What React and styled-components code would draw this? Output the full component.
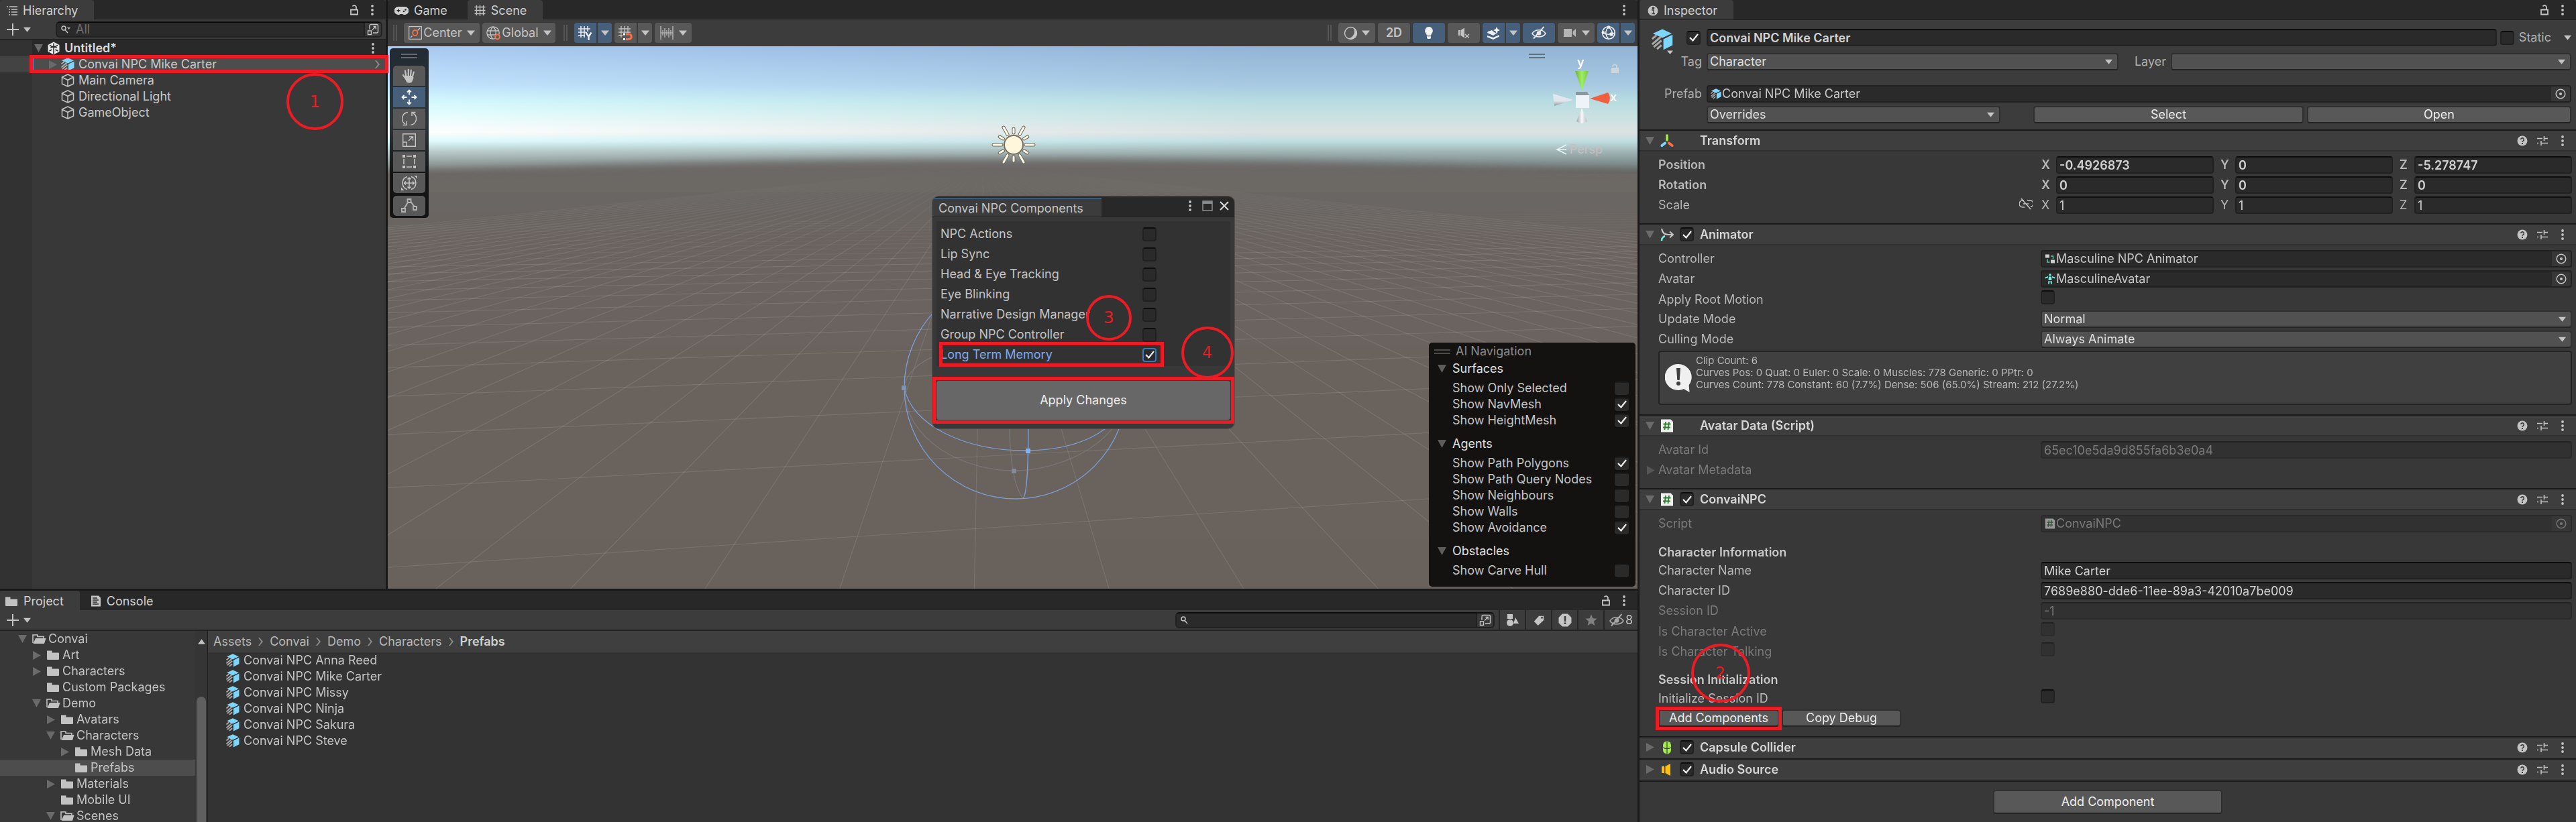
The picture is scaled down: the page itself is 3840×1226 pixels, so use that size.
import React from "react";
import styled, { createGlobalStyle, css } from "styled-components";

const GlobalStyle = createGlobalStyle`
  *, *::before, *::after { box-sizing: border-box; }
  body { margin: 0; background: #191919; font-optical-sizing: none; }
  body, button, input, select {
    font-family: Inter, Roboto, "Liberation Sans", sans-serif;
    font-size: 18px;
    line-height: 24px;
    color: #c4c4c4;
  }
  button, input, select { font-optical-sizing: none; }
  button { margin: 0; padding: 0; border: 0; background: none; cursor: pointer; }
  ul { list-style: none; margin: 0; padding: 0; }
  svg { display: block; flex: none; }
`;

/* ---------- icons ---------- */

const Icon = ({ w = 20, h, box, children, label }) => (
  <svg
    width={w}
    height={h || w}
    viewBox={box || "0 0 20 20"}
    fill="none"
    stroke="none"
    role={label ? "img" : undefined}
    aria-label={label}
    aria-hidden={label ? undefined : true}
  >
    {children}
  </svg>
);

const G = "#c4c4c4";

const Down = ({ w = 12, color = G }) => (
  <Icon w={w} h={Math.round(w * 0.7)} box="0 0 12 8"><path d="M0 0.5h12L6 8z" fill={color} /></Icon>
);
const FoldOpen = ({ color = "#6a6a6a" }) => (
  <Icon w={13} h={12} box="0 0 13 12"><path d="M0 0h13L6.500 12z" fill={color} /></Icon>
);
const FoldClosed = ({ color = "#6a6a6a" }) => (
  <Icon w={12} h={13} box="0 0 12 13"><path d="M0 0v13L12 6.500z" fill={color} /></Icon>
);
const Dots = () => (
  <Icon w={4} h={16} box="0 0 4 16">
    <circle cx="2" cy="2" r="1.900" fill={G} /><circle cx="2" cy="8" r="1.900" fill={G} /><circle cx="2" cy="14" r="1.900" fill={G} />
  </Icon>
);
const Lock = () => (
  <Icon w={14} h={18} box="0 0 14 18">
    <path d="M2 8.500h10v7H2zM10 8V4.500A3 3 0 0 0 4.500 3.500" stroke={G} strokeWidth="1.800" />
  </Icon>
);
const ListIcon = () => (
  <Icon w={16} h={14} box="0 0 16 14">
    <path d="M0 1h2M4 1h12M3 5h2M7 5h9M3 9h2M7 9h9M3 13h2M7 13h9" stroke={G} strokeWidth="1.600" />
  </Icon>
);
const Plus = () => (
  <Icon w={18} box="0 0 18 18"><path d="M9 0v18M0 9h18" stroke={G} strokeWidth="2" /></Icon>
);
const SearchGlyph = ({ caret }) => (
  <Icon w={14} h={12} box="0 0 14 12">
    <circle cx="4" cy="4" r="3" stroke={G} strokeWidth="1.500" />
    <path d="M6 6.500l4 4.500" stroke={G} strokeWidth="1.600" />
    {caret && <path d="M9 3h5l-2.500 3z" fill={G} />}
  </Icon>
);
const PopOut = () => (
  <Icon w={18} box="0 0 18 18">
    <path d="M4 9V3.500A2 2 0 0 1 6 1.500h8.500a2 2 0 0 1 2 2V12a2 2 0 0 1-2 2H9" stroke={G} strokeWidth="1.400" />
    <path d="M1.500 11h5v5.500h-5zM8 9.500l5-5M9.500 4.500h3.700v3.700" stroke={G} strokeWidth="1.400" />
  </Icon>
);
const UnityIcon = () => (
  <Icon w={20} box="0 0 20 20">
    <path d="M10 0.500L18.500 5v10L10 19.500 1.500 15V5z" fill="#e8e8e8" />
    <path d="M10 2.500V7L5.500 9M10 2.500V7l4.500 2M3.500 14l4-2M16.500 14l-4-2M10 11v8M4 5.500L10 9l6-3.500M10 9v4" stroke="#282828" strokeWidth="1.500" />
  </Icon>
);
const CubeIcon = () => (
  <Icon w={20} box="0 0 20 20">
    <path d="M10 1l8.500 4v10L10 19l-8.500-4V5zM1.500 5L10 9.500 18.500 5M10 9.500V19" stroke={G} strokeWidth="1.500" strokeLinejoin="round" />
  </Icon>
);
const PrefabIcon = ({ w = 20, h }) => (
  <Icon w={w} h={h || w} box="0 0 20 20">
    <path d="M10 0.300L18.800 4.300 10 8.500 1.200 4.300z" fill="#7fd6fd" />
    <path d="M19.500 5.500v9.800L11 19.600V9.700z" fill="#7fd6fd" />
    <path d="M0.500 9.500L4.500 6M0.500 14.500L8.500 7.500M2 17L9.200 10.800M5 18.800L9.200 15.200" stroke="#a9a9a9" strokeWidth="1.900" />
  </Icon>
);
const FolderIcon = () => (
  <Icon w={20} h={16} box="0 0 20 16"><path d="M1 1.500h7.500v3H18a1 1 0 0 1 1 1V14a1 1 0 0 1-1 1H2a1 1 0 0 1-1-1z" fill="#c2c2c2" /></Icon>
);
const FolderOpen = () => (
  <Icon w={21} h={16} box="0 0 21 16">
    <path d="M1 14V2h7v2.500h9V7" stroke="#c2c2c2" strokeWidth="1.600" />
    <path d="M5 7h15.500L18 15H1.500z" fill="#c2c2c2" />
  </Icon>
);
const ConsoleIcon = () => (
  <Icon w={16} h={17} box="0 0 16 17">
    <path d="M1 0.500h11L15 3.500V16.500H1z" fill={G} />
    <path d="M3 4h7M3 7h9M3 10h7M3 13h9" stroke="#282828" strokeWidth="1.400" />
  </Icon>
);
const GamePad = () => (
  <Icon w={21} h={12} box="0 0 21 12">
    <path d="M6 0h9a6 6 0 1 1-3 11H9A6 6 0 1 1 6 0z" fill="#d0d0d0" />
    <path d="M6 3.300v5M3.500 5.800h5" stroke="#282828" strokeWidth="1.500" />
    <circle cx="14" cy="7" r="1.300" fill="#282828" /><circle cx="16.500" cy="4.500" r="1.300" fill="#282828" />
  </Icon>
);
const HashIcon = () => (
  <Icon w={17} box="0 0 17 17"><path d="M3.500 1v15M8.500 0v17M13.500 1v15M0.500 3.500h16M0.500 8.500h16M0.500 13.500h16" stroke={G} strokeWidth="1.300" /></Icon>
);
const PivotIcon = () => (
  <Icon w={20}>
    <path d="M0.700 0.700h18.600v18.600H0.700z" stroke={G} strokeWidth="1.200" />
    <path d="M3 17l2.500-2.500M13.500 6.500L17 3" stroke={G} strokeWidth="1.400" />
    <ellipse cx="9.800" cy="10" rx="3.600" ry="4" stroke="#ff6f43" strokeWidth="1.800" />
  </Icon>
);
const GlobeIcon = () => (
  <Icon w={21} box="0 0 21 21">
    <circle cx="10" cy="10" r="9.200" stroke={G} strokeWidth="1.300" />
    <path d="M10 1c-5 4-5 14 0 18M10 1c5 4 5 10 3 12M1.500 7h17M1.500 13h11" stroke={G} strokeWidth="1.300" />
    <circle cx="16.500" cy="16" r="3.400" stroke="#ff6f43" strokeWidth="2" fill="#585858" />
  </Icon>
);
const GridY = () => (
  <Icon w={21} box="0 0 21 21">
    <path d="M4 0v17M9 0v17M14 0v8M0 4h18M0 9h12M0 14h10" stroke="#eee" strokeWidth="1.500" />
    <path d="M11.500 9.500l4 6 4-6M15.500 15v6" stroke="#eee" strokeWidth="2.400" />
  </Icon>
);
const SnapIcon = () => (
  <Icon w={21} box="0 0 21 21">
    <path d="M4 0v17M9 0v10M14 0v10M0 4h18M0 9h18M0 14h6" stroke={G} strokeWidth="1.300" />
    <path d="M11 12h4.500a3.500 3.500 0 0 1 0 7.500H11" stroke="#ff6f43" strokeWidth="3" />
    <path d="M7 10.500h3v3H7zM7 18h3v3H7z" fill="#fff" />
  </Icon>
);
const RulerIcon = () => (
  <Icon w={20} box="0 0 20 20"><path d="M1 0v20M19 0v20M1 10h18M4 6v8M7 3v14M10 6v8M13 3v14M16 6v8" stroke={G} strokeWidth="1.200" /></Icon>
);
const ShadeIcon = () => (
  <Icon w={21} box="0 0 21 21">
    <circle cx="10.500" cy="10.500" r="9" stroke={G} strokeWidth="1.400" />
    <path d="M14 2a10 10 0 0 1-8 16 9 9 0 1 0 8-16z" fill={G} />
  </Icon>
);
const BulbIcon = () => (
  <Icon w={20}>
    <path d="M10 1a6 6 0 0 1 4 10.300L13 14H7l-1-2.700A6 6 0 0 1 10 1z" fill="#f2f2f2" />
    <path d="M7 15.300h6V17a2 2 0 0 1-2 2H9a2 2 0 0 1-2-2z" fill="#f2f2f2" />
  </Icon>
);
const MuteIcon = () => (
  <Icon w={20}>
    <path d="M2 6h2.500v8H2zM5.500 6L11 2.500v15L5.500 14z" fill={G} />
    <path d="M12 12l6 5.500M18 12l-6 5.500" stroke={G} strokeWidth="1.500" />
  </Icon>
);
const FxIcon = () => (
  <Icon w={21} box="0 0 21 21">
    <path d="M2 8l6-2 2 2 3 2 4-1-7 5-9-4zM1 14l9 3 9-4v2.500L10 20l-9-3.500z" fill="#eee" />
    <path d="M15 1l1.500 3.500L20 6l-3.500 1.500L15 11l-1.500-3.500L10 6l3.500-1.500z" fill="#fff" />
  </Icon>
);
const EyeOff = ({ color = "#e8e8e8" }) => (
  <Icon w={22} h={20} box="0 0 22 20">
    <path d="M1 11c4-7 16-7 20 0-4 6.500-16 6.500-20 0z" stroke={color} strokeWidth="1.600" />
    <circle cx="11" cy="10.500" r="3.300" fill={color} />
    <path d="M3 18.500L18.500 1" stroke={color} strokeWidth="1.900" />
  </Icon>
);
const CamIcon = () => (
  <Icon w={20}><path d="M1 4h12v12H1zM14.500 8L19 4v12l-4.500-4z" fill="#b4b4b4" /></Icon>
);
const GizmoIcon = () => (
  <Icon w={22} box="0 0 22 22">
    <circle cx="11" cy="11" r="9.300" stroke="#eee" strokeWidth="1.600" />
    <path d="M11 2c-6 6-5 13 0 18M11 2c5 5 6 8 5 11M2 10c4 4 12 4 18 1" stroke="#eee" strokeWidth="1.500" />
    <circle cx="11" cy="2.500" r="2.300" fill="#eee" /><circle cx="2.800" cy="10.500" r="2.300" fill="#eee" /><circle cx="15" cy="13" r="2.800" fill="#eee" />
  </Icon>
);
const HandIcon = () => (
  <Icon w={22} box="0 0 22 22">
    <path d="M6.500 12.500L5 3.500M9.800 11V1.800M13 11l0.800-8.500M15.800 12.500l2-7M6 15.500L2 10" stroke={G} strokeWidth="2.200" strokeLinecap="round" />
    <path d="M5 11h11.500l1 3-2.500 6.500c-2 1.500-6 1.500-8 0L4.500 14z" fill={G} />
  </Icon>
);
const MoveIcon = () => (
  <Icon w={24} box="0 0 24 24">
    <path d="M12 1.500v7M12 15.500v7M1.500 12h7M15.500 12h7M9 4.500l3-3 3 3M9 19.500l3 3 3-3M4.500 9l-3 3 3 3M19.500 9l3 3-3 3" stroke="#f2f2f2" strokeWidth="1.800" />
  </Icon>
);
const RotateIcon = () => (
  <Icon w={22} box="0 0 22 22">
    <path d="M9 1.500A9.500 9.500 0 0 0 5 19M1.500 20.500H7V15M13 20.500A9.500 9.500 0 0 0 17 3M20.500 1.500H15V7" stroke={G} strokeWidth="1.500" />
  </Icon>
);
const ScaleIcon = () => (
  <Icon w={20}>
    <path d="M0.700 0.700h18.600v18.600H0.700zM0.700 13H6v6.500M9 11l6-6M10 5h5.500v5.500" stroke={G} strokeWidth="1.400" />
  </Icon>
);
const RectIcon = () => (
  <Icon w={20}>
    <path d="M0 0h4v4H0zM16 0h4v4h-4zM0 16h4v4H0zM16 16h4v4h-4z" fill={G} />
    <path d="M6 2h8M6 18h8M2 6v8M18 6v8" stroke={G} strokeWidth="1.600" />
  </Icon>
);
const TransformTool = () => (
  <Icon w={24} box="0 0 24 24">
    <path d="M9 2.500A10 10 0 0 0 9 21.500M15 2.500a10 10 0 0 1 0 19M12 4v16M4.500 12h15M9.500 6.500L12 4l2.500 2.500M9.500 17.500L12 20l2.500-2.500M7 9.500L4.500 12 7 14.500M17 9.500l2.500 2.500-2.500 2.500" stroke={G} strokeWidth="1.500" />
    <path d="M19.500 1H24v4.500zM0 18.500V23h4.500z" fill={G} />
  </Icon>
);
const SplineTool = () => (
  <Icon w={24} box="0 0 24 24">
    <path d="M9.500 2h5v5h-5zM1 16h5v5H1zM18 13h5v5h-5zM10 7L4.500 16M14.500 6l5 7" stroke="#b4b4b4" strokeWidth="1.900" />
  </Icon>
);
const InfoIcon = () => (
  <Icon w={16} box="0 0 16 16">
    <circle cx="8" cy="8" r="7.500" fill={G} />
    <path d="M6 7h3v5.500M6 12.500h5M7.500 3h2v2h-2z" stroke="#3c3c3c" strokeWidth="1.500" />
  </Icon>
);
const HelpIcon = () => (
  <Icon w={16} box="0 0 16 16">
    <circle cx="8" cy="8" r="7.500" fill={G} />
    <path d="M5.700 6a2.300 2.300 0 1 1 3.300 2.200c-.7.300-1 .6-1 1.500" stroke="#3c3c3c" strokeWidth="1.600" />
    <path d="M7 11h2v2H7z" fill="#3c3c3c" />
  </Icon>
);
const PresetIcon = () => (
  <Icon w={16} box="0 0 16 16"><path d="M0 4.500h8M11 4.500h5M10.500 1v7M0 11.500h2M5.500 11.500H16M6 8v7" stroke={G} strokeWidth="1.600" /></Icon>
);
const PickerIcon = ({ color = G }) => (
  <Icon w={16} box="0 0 16 16"><circle cx="8" cy="8" r="6.800" stroke={color} strokeWidth="1.500" /><circle cx="8" cy="8" r="2.100" fill={color} /></Icon>
);
const AxesIcon = () => (
  <Icon w={20}>
    <path d="M10 2v7" stroke="#a4ee4c" strokeWidth="3.600" strokeLinecap="round" />
    <path d="M7 13.500l-4.500 3.500" stroke="#7fd6fd" strokeWidth="4" strokeLinecap="round" />
    <path d="M13 13.500l4.500 3.500" stroke="#ff6f43" strokeWidth="4" strokeLinecap="round" />
  </Icon>
);
const AnimatorIcon = () => (
  <Icon w={20}>
    <path d="M2 1c1 6 4 9 10 9h6M14 5.500l5 4.500-5 4.500" stroke={G} strokeWidth="2.200" />
    <path d="M2 19c0-3 1-5.500 5-7" stroke="#6ef0dc" strokeWidth="2.600" />
  </Icon>
);
const ScriptIcon = ({ w = 20, dim }) => (
  <Icon w={w}>
    <g opacity={dim ? 0.55 : 1}>
      <path d="M1 0.500h14.500L19 4v15.500H1z" fill="#efefef" />
      <path d="M8 4L6.500 16M13 4l-1.500 12M4.500 7.500h11M4 12.500h11" stroke="#2e7d32" strokeWidth="1.800" />
    </g>
  </Icon>
);
const CapsuleIcon = () => (
  <Icon w={20}>
    <rect x="4" y="0.500" width="12" height="19" rx="6" fill="#a4ee4c" />
    <path d="M10 1v18M4 10c3 2 9 2 12 0" stroke="#3c3c3c" strokeWidth="1.200" />
  </Icon>
);
const AudioIcon = () => (
  <Icon w={20}><path d="M2 5h4v10H2zM7.500 5L15 1v18l-7.500-4z" fill="#ffc107" /></Icon>
);
const ControllerIcon = () => (
  <Icon w={16} box="0 0 16 16">
    <path d="M1 1.500h6v5H1zM9 9.500h6v5H9z" fill="#d0d0d0" />
    <path d="M9 4h3.500v4M4 8.500V13h3.500" stroke="#5fd0b8" strokeWidth="1.400" />
  </Icon>
);
const AvatarIcon = () => (
  <Icon w={16} box="0 0 16 16">
    <circle cx="8" cy="2" r="1.800" fill="#6ef0dc" />
    <path d="M6 4.500h4l.5 5.500h-5zM0.500 5.500l4.500-1.500v2L1 7.500zM15.500 5.500L11 4v2l4 1.500zM5.500 11h2L7 15.500H5zM8.500 11h2l.5 4.500H9z" fill="#6ef0dc" />
  </Icon>
);
const LinkOff = () => (
  <Icon w={20}>
    <path d="M7 5H5a4.500 4.500 0 0 0 0 10h3M12 5h3a4.500 4.500 0 0 1 2 9.500M6 10h3M11 10h3M3 2l14 16" stroke={G} strokeWidth="1.500" />
  </Icon>
);
const BubbleIcon = () => (
  <Icon w={40} h={42} box="0 0 40 42">
    <path d="M20 0a20 19.500 0 1 1-8 37.500A20 19.500 0 0 1 20 0z" fill="#f0f0f0" />
    <path d="M26 36l10.500 6-1-12z" fill="#f0f0f0" />
    <path d="M17 6h6l-1.300 18h-3.400z" fill="#404040" /><circle cx="20" cy="29" r="3" fill="#404040" />
  </Icon>
);
const ShapesIcon = () => (
  <Icon w={20}><path d="M2 1h8v7H2zM14 6l5 9h-8z" fill={G} /><circle cx="6" cy="14" r="5" fill={G} /></Icon>
);
const TagIcon = () => (
  <Icon w={18}><path d="M10 3h8v7L8.500 19 2 12z" fill={G} /><circle cx="15" cy="6" r="1.600" fill="#3c3c3c" /></Icon>
);
const AlertIcon = () => (
  <Icon w={20}>
    <path d="M6 0.500h8L19.500 6v8L14 19.500H6L0.500 14V6z" fill={G} /><path d="M8.700 4h2.600v8H8.700zM8.700 13.500h2.600V16H8.700z" fill="#3c3c3c" />
  </Icon>
);
const StarIcon = () => (
  <Icon w={18}><path d="M10 0.500l2.700 6.500 6.800.5-5.200 4.500 1.700 7L10 15.200 4 19l1.700-7L.5 7.500 7.300 7z" fill="#808080" /></Icon>
);
const MaxIcon = () => (
  <Icon w={16} box="0 0 16 16"><path d="M1 1h14v14H1z" stroke="#8a8a8a" strokeWidth="1.600" /><path d="M1 1h14v4H1z" fill="#8a8a8a" /></Icon>
);
const CloseIcon = () => (
  <Icon w={14} box="0 0 14 14"><path d="M1 1l12 12M13 1L1 13" stroke="#dcdcdc" strokeWidth="2" /></Icon>
);
const Crumb = () => (
  <Icon w={9} h={14} box="0 0 9 14"><path d="M1 1h2l5 6-5 6H1l4.500-6z" fill="#8c8c8c" /></Icon>
);

/* ---------- shell ---------- */

const Editor = styled.div`
  display: grid;
  grid-template-columns: minmax(0, 2441fr) minmax(0, 1396fr);
  grid-template-rows: minmax(0, 1fr);
  gap: 3px;
  height: 100vh;
  overflow: hidden;
  background: #191919;
`;
const Workspace = styled.div`
  display: grid;
  grid-template-rows: minmax(0, 878fr) minmax(0, 345fr);
  gap: 3px;
  min-width: 0;
`;
const TopRow = styled.div`
  display: grid;
  grid-template-columns: minmax(0, 575fr) minmax(0, 1863fr);
  gap: 3px;
  min-height: 0;
`;
const Panel = styled.section`
  position: relative;
  display: flex;
  flex-direction: column;
  min-width: 0;
  min-height: 0;
  background: #383838;
`;
const TabBar = styled.div`
  display: flex;
  align-items: stretch;
  height: 29px;
  flex: none;
  background: #282828;
  border-radius: 4px 4px 0 0;
`;
const Tab = styled.button`
  display: flex;
  align-items: center;
  gap: 8px;
  padding: 2px ${(p) => p.$end || 24}px 0 ${(p) => p.$start || 10}px;
  background: ${(p) => (p.$active ? "#3c3c3c" : "transparent")};
  border-radius: 4px 4px 0 0;
  color: #d0d0d0;
`;
const TabTools = styled.div`
  display: flex;
  align-items: center;
  gap: 18px;
  margin-left: auto;
  padding-right: 18px;
`;
const Plain = styled.button`
  display: flex;
  align-items: center;
  justify-content: center;
`;
const PanelTools = ({ lock = true }) => (
  <TabTools>
    {lock && <Plain aria-label="Lock panel"><Lock /></Plain>}
    <Plain aria-label="Panel menu"><Dots /></Plain>
  </TabTools>
);
const ToolStrip = styled.div`
  display: flex;
  align-items: center;
  height: 31px;
  flex: none;
  background: #3c3c3c;
  border-bottom: 2px solid #232323;
`;
const CreateButton = styled.button`
  display: flex;
  align-items: center;
  gap: 7px;
  padding: 0 10px;
`;
const SearchBox = styled.label`
  display: flex;
  align-items: center;
  height: 24px;
  overflow: hidden;
  background: #2a2a2a;
  border: 2px solid #212121;
  border-top-color: #0d0d0d;
  border-radius: 6px;
  padding-left: 6px;
  input {
    flex: 1;
    min-width: 0;
    height: 20px;
    padding: 0 8px;
    border: 0;
    outline: 0;
    background: none;
  }
  input::placeholder { color: #6e6e6e; opacity: 1; }
`;
const SearchEnd = styled.button`
  display: flex;
  align-items: center;
  justify-content: center;
  width: 26px;
  height: 22px;
  background: #383838;
  border-left: 2px solid #212121;
`;
const HierSearch = styled(SearchBox)`
  flex: 1;
  margin: 0 5px 0 27px;
`;
const ProjectSearch = styled(SearchBox)`
  width: 476px;
  margin-left: auto;
  margin-right: 6px;
`;

/* ---------- annotations ---------- */

const marked = css`
  position: relative;
  &::after {
    content: "";
    position: absolute;
    inset: ${(p) => p.$mark};
    border: 5px solid #ed1c24;
    pointer-events: none;
    z-index: 3;
  }
`;
const Marker = styled.div`
  position: absolute;
  z-index: 5;
  left: ${(p) => p.$x}px;
  top: ${(p) => p.$y}px;
  width: ${(p) => p.$d}px;
  height: ${(p) => p.$d}px;
  display: flex;
  align-items: center;
  justify-content: center;
  border: 4px solid #ed1c24;
  border-radius: 50%;
  color: #ed1c24;
  font-family: "DejaVu Sans", sans-serif;
  font-size: 24px;
  pointer-events: none;
`;

/* ---------- hierarchy ---------- */

const HierarchyBody = styled.ul`
  flex: 1;
  background: linear-gradient(90deg, #323232 48px, #383838 48px);
`;
const HierRow = styled.li`
  display: flex;
  align-items: center;
  height: 24px;
  gap: 6px;
  padding: 0 8px 0 ${(p) => p.$pad}px;
  font-weight: ${(p) => (p.$scene ? 600 : 400)};
  color: ${(p) => (p.$scene ? "#dcdcdc" : "#c8c8c8")};
  background: ${(p) => (p.$scene ? "linear-gradient(90deg, #323232 48px, #292929 48px)" : "none")};
`;
const SelectedRow = styled(HierRow)`
  ${marked}
  background: linear-gradient(90deg, #434343 49px, #2680c0 49px, #2680c0 51px, #4d4d4d 51px);
`;
const Push = styled.span`
  margin-left: auto;
  padding-right: ${(p) => p.$end || 0}px;
`;
const FoldSlot = styled.span`
  display: flex;
  justify-content: center;
  width: 13px;
`;

const Hierarchy = () => (
  <Panel>
    <TabBar>
      <Tab $active><ListIcon />Hierarchy</Tab>
      <PanelTools />
    </TabBar>
    <ToolStrip>
      <CreateButton aria-label="Create"><Plus /><Down w={11} /></CreateButton>
      <HierSearch>
        <SearchGlyph caret />
        <input type="text" placeholder="All" aria-label="Search hierarchy" />
        <SearchEnd aria-label="Open search window"><PopOut /></SearchEnd>
      </HierSearch>
    </ToolStrip>
    <HierarchyBody>
      <HierRow $scene $pad={51}>
        <FoldOpen /><UnityIcon />Untitled*
        <Push $end={9}><Plain aria-label="Scene menu"><Dots /></Plain></Push>
      </HierRow>
      <SelectedRow $pad={72} $mark="-2px -4px -1px 44px">
        <FoldSlot><FoldClosed /></FoldSlot><PrefabIcon />Convai NPC Mike Carter
        <Push><Crumb /></Push>
      </SelectedRow>
      {["Main Camera", "Directional Light", "GameObject"].map((name) => (
        <HierRow key={name} $pad={91}><CubeIcon />{name}</HierRow>
      ))}
    </HierarchyBody>
    <Marker $x={427} $y={109} $d={85}>1</Marker>
  </Panel>
);

/* ---------- scene view ---------- */

const SceneBar = styled.div`
  display: flex;
  align-items: center;
  gap: 4px;
  height: 40px;
  flex: none;
  padding: 0 4px 0 8px;
  background: #3c3c3c;
`;
const Grip = styled.span`
  width: 6px;
  height: 24px;
  margin: 0 6px 0 ${(p) => p.$before || 0}px;
  border: solid #555;
  border-width: 0 2px;
`;
const BarButton = styled.button`
  display: flex;
  align-items: center;
  justify-content: center;
  gap: ${(p) => p.$gap || 2}px;
  width: ${(p) => p.$w}px;
  height: 30px;
  background: ${(p) => (p.$on ? "#46607c" : "#585858")};
  border-radius: 4px;
  white-space: nowrap;
  font-weight: ${(p) => (p.$bold ? 600 : 400)};
`;
const Split = styled.div`
  display: flex;
  gap: 2px;
  ${BarButton}:first-child { border-radius: 4px 0 0 4px; }
  ${BarButton}:last-child { border-radius: 0 4px 4px 0; }
`;
const Spacer = styled.span`
  flex: 1;
`;
const Viewport = styled.div`
  position: relative;
  flex: 1;
  min-height: 0;
  background: #6b645f;
`;
const Backdrop = styled.svg`
  position: absolute;
  inset: 0;
  width: 100%;
  height: 100%;
`;
const Palette = styled.div`
  position: absolute;
  left: 3px;
  top: 3px;
  width: 58px;
  display: flex;
  flex-direction: column;
  align-items: center;
  gap: 2px;
  padding: 8px 0 3px;
  border-radius: 5px;
  background: linear-gradient(#222a33, #2a3538 45%, #141414 75%);
`;
const Bars = styled.span`
  width: ${(p) => p.$w || 24}px;
  height: 7px;
  border: solid ${(p) => p.$color || "#63696c"};
  border-width: 2px 0;
`;
const PaletteGrip = styled(Bars)`
  margin-bottom: 9px;
`;
const Tool = styled.button`
  display: flex;
  align-items: center;
  justify-content: center;
  width: 48px;
  height: 30px;
  background: ${(p) => (p.$on ? "#46607c" : "#585858")};
  border-radius: ${(p) => p.$round || "0"};
  margin-top: ${(p) => (p.$apart ? 2 : 0)}px;
`;
const GizmoBox = styled.svg`
  position: absolute;
  top: 0;
  right: 0;
`;

const VP = { x: 1465, y: 247 };
const radials = Array.from({ length: 61 }, (_, i) => (i - 30) * 0.318 - 0.02);
const rungs = Array.from({ length: 24 }, (_, k) => VP.y + 1 / (0.00182 + 0.00045 * k));

const SceneBackdrop = () => (
  <Backdrop viewBox="578 69 1863 809" preserveAspectRatio="xMidYMid slice" aria-hidden="true">
    <defs>
      <linearGradient id="sky" gradientUnits="userSpaceOnUse" x1="0" y1="69" x2="0" y2="260">
        <stop offset="0" stopColor="#a9caf1" />
        <stop offset="0.300" stopColor="#c2e3fe" />
        <stop offset="0.430" stopColor="#d4fafe" />
        <stop offset="0.560" stopColor="#ecffff" />
        <stop offset="0.670" stopColor="#ffffff" />
        <stop offset="0.740" stopColor="#dffcff" />
        <stop offset="0.820" stopColor="#bccdcd" />
        <stop offset="0.920" stopColor="#929c9a" />
        <stop offset="1" stopColor="#6c6866" />
      </linearGradient>
      <linearGradient id="dusk" x1="0" x2="1" y1="0" y2="0">
        <stop offset="0" stopColor="#06282e" stopOpacity="0" />
        <stop offset="0.700" stopColor="#06282e" stopOpacity="0.140" />
        <stop offset="1" stopColor="#06282e" stopOpacity="0.140" />
      </linearGradient>
      <linearGradient id="ground" x1="0" x2="0" y1="0" y2="1">
        <stop offset="0" stopColor="#6c6866" />
        <stop offset="0.200" stopColor="#6a635e" />
        <stop offset="1" stopColor="#69615b" />
      </linearGradient>
      <linearGradient id="fade" gradientUnits="userSpaceOnUse" x1="0" y1="255" x2="0" y2="380">
        <stop offset="0" stopColor="#000" />
        <stop offset="1" stopColor="#fff" />
      </linearGradient>
      <mask id="far" maskUnits="userSpaceOnUse" x="0" y="0" width="3000" height="1200">
        <rect x="0" y="0" width="3000" height="1200" fill="url(#fade)" />
      </mask>
      <filter id="haze" x="-5%" y="-10%" width="110%" height="120%"><feGaussianBlur stdDeviation="7" /></filter>
    </defs>
    <rect x="578" y="69" width="1863" height="210" fill="url(#sky)" />
    <rect x="578" y="69" width="1863" height="190" fill="url(#dusk)" />
    <path d="M500 264Q1000 238 1500 238T2520 260V960H500z" fill="url(#ground)" filter="url(#haze)" />
    <g mask="url(#far)" stroke="#b4b4b4" strokeWidth="1.200">
      {radials.map((s, i) => (
        <path key={i} d={`M${VP.x} ${VP.y}L${VP.x + s * 700} ${VP.y + 700}`} opacity="0.200" />
      ))}
      {rungs.map((y, i) => (
        <path key={i} d={`M500 ${y + (y - VP.y) * 0.1}L2500 ${y - (y - VP.y) * 0.140}`} opacity={i > 12 ? 0.1 : 0.2} />
      ))}
      <path d="M1466 240V640" stroke="#8d9fc0" opacity="0.500" />
    </g>
    <g stroke="#7da7e8" strokeWidth="1.400" fill="none" opacity="0.850">
      <circle cx="1514" cy="578" r="166" />
      <path d="M1348 578c10 56 90 94 180 94s152-38 152-94M1533 620c0 60-1 118-8 123" />
      <path d="M1348 578c10-90 320-90 332 0M1348 578c0 80 90 124 163 124s169-44 169-124M1504 600c0 80 6 124 21 143" stroke="#8d93a0" opacity="0.450" />
    </g>
    <path d="M1529 669h7v7h-7z" fill="#7fb2ff" />
    <path d="M1344 575h7v7h-7z" fill="#7f93b5" />
    <path d="M1508 699h7v7h-7z" fill="#868b98" />
    <g strokeLinecap="round">
      {Array.from({ length: 12 }, (_, i) => {
        const a = (i * Math.PI) / 6;
        const r = i % 2 ? 24 : 30;
        const ray = `M${1511 + 18 * Math.cos(a)} ${216 + 18 * Math.sin(a)}L${1511 + r * Math.cos(a)} ${216 + r * Math.sin(a)}`;
        return (
          <React.Fragment key={i}>
            <path d={ray} stroke="#6f6a5c" strokeWidth="5" />
            <path d={ray} stroke="#fffbe8" strokeWidth="3" />
          </React.Fragment>
        );
      })}
    </g>
    <circle cx="1511" cy="216" r="14" fill="#fff6dc" stroke="#77705f" strokeWidth="2" />
  </Backdrop>
);

const ViewGizmo = () => (
  <GizmoBox width="170" height="175" viewBox="2271 69 170 175" role="img" aria-label="View orientation">
    <defs>
      <linearGradient id="green"><stop offset="0" stopColor="#6fae3e" /><stop offset="0.500" stopColor="#9df062" /><stop offset="1" stopColor="#7cc24a" /></linearGradient>
      <linearGradient id="grey"><stop offset="0" stopColor="#9ca3a8" /><stop offset="0.500" stopColor="#f8fafc" /><stop offset="1" stopColor="#b8bec2" /></linearGradient>
      <linearGradient id="side" x1="0" x2="0" y1="0" y2="1"><stop offset="0" stopColor="#e4eaf2" /><stop offset="0.600" stopColor="#dfe5ec" /><stop offset="1" stopColor="#8e9498" /></linearGradient>
    </defs>
    <path d="M2279 81h24M2279 86h24" stroke="#5e7078" strokeWidth="2" />
    <path d="M2348 106h20l-10 29z" fill="url(#green)" />
    <path d="M2358 161l8 20q-8 6-16 0z" fill="url(#grey)" />
    <path d="M2315 140l30 9-28 9z" fill="url(#side)" />
    <path d="M2370 147l27-9q6 8 0 17z" fill="#f0603f" />
    <path d="M2349 137h17l3 5v19h-20z" fill="#eef3f8" />
    <path d="M2349 137h17l3 5h-20z" fill="#8d969d" />
    <path d="M2402 101h11v8h-11z" fill="#cdd6da" />
    <path d="M2404 99.500a3 3 0 0 1 6 0v2" stroke="#cdd6da" strokeWidth="1.500" fill="none" />
    <path d="M2335 216l-14 7 14 7M2321 223h14" stroke="#e8f6f4" strokeWidth="1.500" fill="none" />
    <g fontFamily="Inter, sans-serif" fontSize="18">
      <text x="2351" y="99" fill="#fff" fontWeight="600">y</text>
      <text x="2400" y="151" fill="#fff" fontWeight="600">x</text>
      <text x="2340" y="229" fill="#cbbfbf">Persp</text>
    </g>
  </GizmoBox>
);

/* ---------- check boxes ---------- */

const CheckBox = styled.span`
  display: inline-grid;
  flex: none;
  opacity: ${(p) => (p.$dim ? 0.5 : 1)};
  > * { grid-area: 1 / 1; }
  input {
    appearance: none;
    margin: 0;
    width: 21px;
    height: ${(p) => (p.$flat ? 20 : 21)}px;
    border-radius: 4px;
    background: #2a2a2a;
    border: 2px solid ${(p) => (p.$focus ? "#3a79bb" : p.$flat ? "#2a2a2a" : "#212121")};
    border-top-color: ${(p) => (p.$focus ? "#3a79bb" : p.$flat ? "#1c1c1c" : "#0d0d0d")};
  }
  svg { place-self: center; pointer-events: none; visibility: hidden; }
  input:checked + svg { visibility: visible; }
`;
const Check = ({ id, on, dim, focus, flat, label }) => (
  <CheckBox $dim={dim} $focus={focus} $flat={flat}>
    <input type="checkbox" id={id} defaultChecked={on} disabled={dim} aria-label={label} />
    <Icon w={14} h={12} box="0 0 14 12"><path d="M1 6l4.500 4.500L13 1" stroke="#eee" strokeWidth="2.200" /></Icon>
  </CheckBox>
);

/* ---------- AI navigation overlay ---------- */

const NavPanel = styled.div`
  position: absolute;
  right: 3px;
  bottom: 3px;
  width: 308px;
  padding: 0 10px 12px 0;
  border-radius: 5px;
  background: #131210;
`;
const NavTitle = styled.div`
  display: flex;
  align-items: center;
  gap: 8px;
  height: 26px;
  padding-left: 8px;
  color: #8c8c8c;
`;
const NavHead = styled.h3`
  display: flex;
  align-items: center;
  gap: 9px;
  margin: 0 0 4px;
  padding-left: 13px;
  height: 26px;
  font-size: 18px;
  font-weight: 400;
  color: #e0e0e0;
`;
const NavGroup = styled.div`
  margin-bottom: 10px;
  &:last-child { margin-bottom: 0; }
`;
const NavRow = styled.div`
  display: flex;
  align-items: center;
  justify-content: space-between;
  height: 24px;
  padding-left: 35px;
`;
const navGroups = [
  ["Surfaces", [["Show Only Selected", false], ["Show NavMesh", true], ["Show HeightMesh", true]]],
  ["Agents", [["Show Path Polygons", true], ["Show Path Query Nodes", false], ["Show Neighbours", false], ["Show Walls", false], ["Show Avoidance", true]]],
  ["Obstacles", [["Show Carve Hull", false]]],
];
const AINavigation = () => (
  <NavPanel>
    <NavTitle><Bars $color="#4c4c4c" />AI Navigation</NavTitle>
    {navGroups.map(([title, rows]) => (
      <NavGroup key={title}>
        <NavHead><FoldOpen color="#5c5c5c" />{title}</NavHead>
        {rows.map(([name, on]) => (
          <NavRow key={name}>
            <label htmlFor={name}>{name}</label>
            <Check id={name} on={on} flat />
          </NavRow>
        ))}
      </NavGroup>
    ))}
  </NavPanel>
);

/* ---------- components window ---------- */

const Window = styled.div`
  position: absolute;
  left: 812px;
  top: 224px;
  width: 450px;
  display: flex;
  flex-direction: column;
  border-radius: 9px;
  background: #383838;
  outline: 1px solid #55504c;
`;
const WindowBar = styled.div`
  display: flex;
  height: 31px;
  padding-top: 2px;
  border-bottom: 1px solid #222;
  border-radius: 9px 9px 0 0;
  overflow: hidden;
  background: #282828;
`;
const WindowTab = styled.div`
  width: 252px;
  padding: 1px 0 0 9px;
  border-top: 2px solid #2c5d87;
  background: #3c3c3c;
  white-space: nowrap;
  line-height: 26px;
`;
const WindowTools = styled.div`
  display: flex;
  align-items: center;
  gap: 10px;
  margin-left: auto;
  padding: 0 8px 4px 0;
  > :first-child { margin-right: 6px; }
`;
const OptionList = styled.div`
  margin: 6px 6px 0;
  padding: 4px 0 2px 6px;
  background: #323232;
`;
const Option = styled.div`
  display: grid;
  grid-template-columns: 301px 21px;
  align-items: center;
  height: 30px;
  color: ${(p) => (p.$focus ? "#7fa8f0" : "#c4c4c4")};
`;
const MarkedOption = styled(Option)`
  ${marked}
`;
const ApplyArea = styled.div`
  ${marked}
  display: flex;
  margin: 16px 0 7px;
  padding: 6px;
`;
const ApplyButton = styled.button`
  flex: 1;
  height: 58px;
  border-radius: 4px;
  background: #676767;
  color: #eee;
`;
const options = ["NPC Actions", "Lip Sync", "Head & Eye Tracking", "Eye Blinking", "Narrative Design Manager", "Group NPC Controller"];

const ComponentsWindow = () => (
  <Window role="dialog" aria-label="Convai NPC Components">
    <WindowBar>
      <WindowTab>Convai NPC Components</WindowTab>
      <WindowTools>
        <Plain aria-label="Window menu"><Dots /></Plain>
        <Plain aria-label="Maximize"><MaxIcon /></Plain>
        <Plain aria-label="Close"><CloseIcon /></Plain>
      </WindowTools>
    </WindowBar>
    <OptionList>
      {options.map((name) => (
        <Option key={name}><label htmlFor={name}>{name}</label><Check id={name} /></Option>
      ))}
      <MarkedOption $focus $mark="-4px 99px -3px -2px">
        <label htmlFor="ltm">Long Term Memory</label><Check id="ltm" on focus />
      </MarkedOption>
    </OptionList>
    <ApplyArea $mark="0"><ApplyButton>Apply Changes</ApplyButton></ApplyArea>
    <Marker $x={229} $y={147} $d={68}>3</Marker>
    <Marker $x={371} $y={194} $d={78}>4</Marker>
  </Window>
);

const Scene = () => (
  <Panel>
    <TabBar>
      <Tab $end={30}><GamePad />Game</Tab>
      <Tab $active><HashIcon />Scene</Tab>
      <PanelTools lock={false} />
    </TabBar>
    <SceneBar>
      <Grip />
      <BarButton $w={113}><PivotIcon />Center&nbsp;<Down /></BarButton>
      <BarButton $w={109}><GlobeIcon />Global&nbsp;<Down /></BarButton>
      <Grip $before={8} />
      <Split>
        <BarButton $on $w={33} aria-label="Grid"><GridY /></BarButton>
        <BarButton $on $w={21} aria-label="Grid options"><Down /></BarButton>
      </Split>
      <Split>
        <BarButton $w={33} aria-label="Snap"><SnapIcon /></BarButton>
        <BarButton $w={21} aria-label="Snap options"><Down /></BarButton>
      </Split>
      <BarButton $w={55} $gap={8} aria-label="Snap increment"><RulerIcon /><Down /></BarButton>
      <Spacer />
      <Grip />
      <BarButton $w={55} $gap={6} aria-label="Draw mode"><ShadeIcon /><Down /></BarButton>
      <BarButton $w={48} $bold>2D</BarButton>
      <BarButton $on $w={48} aria-label="Lighting"><BulbIcon /></BarButton>
      <BarButton $w={48} aria-label="Audio"><MuteIcon /></BarButton>
      <Split>
        <BarButton $on $w={33} aria-label="Effects"><FxIcon /></BarButton>
        <BarButton $on $w={21} aria-label="Effects options"><Down /></BarButton>
      </Split>
      <BarButton $on $w={48} aria-label="Hidden objects"><EyeOff /></BarButton>
      <BarButton $w={55} $gap={8} aria-label="Camera"><CamIcon /><Down /></BarButton>
      <Split>
        <BarButton $on $w={33} aria-label="Gizmos"><GizmoIcon /></BarButton>
        <BarButton $on $w={21} aria-label="Gizmo options"><Down /></BarButton>
      </Split>
    </SceneBar>
    <Viewport>
      <SceneBackdrop />
      <ViewGizmo />
      <Palette>
        <PaletteGrip />
        <Tool $round="5px 5px 0 0" aria-label="View"><HandIcon /></Tool>
        <Tool $on aria-label="Move"><MoveIcon /></Tool>
        <Tool aria-label="Rotate"><RotateIcon /></Tool>
        <Tool aria-label="Scale"><ScaleIcon /></Tool>
        <Tool aria-label="Rect"><RectIcon /></Tool>
        <Tool $round="0 0 5px 5px" aria-label="Transform"><TransformTool /></Tool>
        <Tool $round="5px" $apart aria-label="Spline"><SplineTool /></Tool>
      </Palette>
      <AINavigation />
      <ComponentsWindow />
    </Viewport>
  </Panel>
);

/* ---------- project ---------- */

const ProjectBody = styled.div`
  display: grid;
  grid-template-columns: 291px 19px minmax(0, 1fr);
  grid-template-rows: minmax(0, 1fr);
  flex: 1;
  min-height: 0;
`;
const Tree = styled.ul`
  overflow: hidden;
  min-height: 0;
`;
const TreeRow = styled.li`
  display: flex;
  align-items: center;
  height: 24px;
  padding-left: ${(p) => 27 + p.$level * 21}px;
  background: ${(p) => (p.$selected ? "#4d4d4d" : "none")};
  white-space: nowrap;
`;
const TreeIcon = styled.span`
  width: 24px;
  margin-left: 8px;
`;
const Track = styled.div`
  display: flex;
  flex-direction: column;
  align-items: center;
  gap: 78px;
  padding-top: 12px;
  background: #353535;
  border-right: 1px solid #202020;
  overflow: hidden;
`;
const Thumb = styled.div`
  flex: 1;
  width: 14px;
  border-radius: 7px 7px 0 0;
  background: #5f5f5f;
`;
const Files = styled.div`
  background: #333;
  overflow: hidden;
`;
const Crumbs = styled.nav`
  display: flex;
  align-items: center;
  gap: 9px;
  height: 32px;
  padding: 0 8px;
  background: #3f3f3f;
  a { color: #b8b8b8; text-decoration: none; }
  a[aria-current] { color: #cfcfcf; font-weight: 600; }
`;
const FileRow = styled.li`
  display: flex;
  align-items: center;
  gap: 6px;
  height: 24px;
  padding-left: 27px;
`;
const Filter = styled.button`
  display: flex;
  align-items: center;
  justify-content: center;
  gap: 2px;
  width: ${(p) => p.$w || 39}px;
  height: 29px;
  border-left: 2px solid #262626;
`;
const treeRows = [
  [0, "Convai", "open"], [1, "Art", "closed"], [1, "Characters", "closed"], [1, "Custom Packages", ""],
  [1, "Demo", "open"], [2, "Avatars", "closed"], [2, "Characters", "open"], [3, "Mesh Data", "closed"],
  [3, "Prefabs", "", true], [2, "Materials", "closed"], [2, "Mobile UI", ""], [2, "Scenes", "open"],
];
const files = ["Anna Reed", "Mike Carter", "Missy", "Ninja", "Sakura", "Steve"];
const path = ["Assets", "Convai", "Demo", "Characters", "Prefabs"];

const Project = () => (
  <Panel>
    <TabBar>
      <Tab $active $start={7}><FolderIcon />Project</Tab>
      <Tab $start={16}><ConsoleIcon />Console</Tab>
      <PanelTools />
    </TabBar>
    <ToolStrip>
      <CreateButton aria-label="Create asset"><Plus /><Down w={11} /></CreateButton>
      <ProjectSearch>
        <SearchGlyph />
        <input type="text" aria-label="Search project" />
        <SearchEnd aria-label="Open search window"><PopOut /></SearchEnd>
      </ProjectSearch>
      <Filter aria-label="Filter by type"><ShapesIcon /></Filter>
      <Filter aria-label="Filter by label"><TagIcon /></Filter>
      <Filter aria-label="Filter by log"><AlertIcon /></Filter>
      <Filter aria-label="Favorites"><StarIcon /></Filter>
      <Filter $w={51}><EyeOff color="#a8a8a8" />8</Filter>
    </ToolStrip>
    <ProjectBody>
      <Tree>
        {treeRows.map(([level, name, state, selected], i) => (
          <TreeRow key={i} $level={level} $selected={selected}>
            <FoldSlot>{state === "open" ? <FoldOpen /> : state === "closed" ? <FoldClosed /> : null}</FoldSlot>
            <TreeIcon>{state === "open" ? <FolderOpen /> : <FolderIcon />}</TreeIcon>
            {name}
          </TreeRow>
        ))}
      </Tree>
      <Track>
        <Icon w={11} h={8} box="0 0 12 8"><path d="M0 8h12L6 0z" fill="#c4c4c4" /></Icon>
        <Thumb />
      </Track>
      <Files>
        <Crumbs aria-label="Folder path">
          {path.map((p, i) => (
            <React.Fragment key={p}>
              {i > 0 && <Crumb />}
              <a href={`#${p}`} aria-current={i === path.length - 1 ? "page" : undefined}>{p}</a>
            </React.Fragment>
          ))}
        </Crumbs>
        <ul>
          {files.map((f) => <FileRow key={f}><PrefabIcon />Convai NPC {f}</FileRow>)}
        </ul>
      </Files>
    </ProjectBody>
  </Panel>
);

/* ---------- inspector ---------- */

const fieldBox = css`
  height: 26px;
  min-width: 0;
  width: 100%;
  background: #2a2a2a;
  border: 2px solid #212121;
  border-top-color: #0d0d0d;
  border-radius: 4px;
`;
const TextField = styled.input`
  ${fieldBox}
  padding: 0 3px;
  outline: 0;
  font-weight: ${(p) => (p.$bold ? 600 : 400)};
  color: #d2d2d2;
  &:disabled { background: #313131; border-color: #2a2a2a; border-top-color: #222; color: #7a7a7a; }
`;
const ObjectBox = styled.div`
  ${fieldBox}
  display: flex;
  align-items: center;
  gap: 1px;
  border-top-color: #212121;
  padding-left: 4px;
  overflow: hidden;
  background: ${(p) => (p.$dim ? "#313131" : "#2a2a2a")};
  border-color: ${(p) => (p.$dim ? "#2a2a2a" : "#212121")};
  input {
    flex: 1;
    min-width: 0;
    height: 22px;
    padding: 0;
    border: 0;
    outline: 0;
    background: none;
    color: ${(p) => (p.$dim ? "#7a7a7a" : "#c8c8c8")};
  }
`;
const Picker = styled.button`
  display: flex;
  align-items: center;
  justify-content: center;
  width: 28px;
  height: 22px;
  background: #373737;
`;
const ObjectField = ({ id, icon, value, dim }) => (
  <ObjectBox $dim={dim}>
    {icon}
    <input id={id} type="text" readOnly value={value} disabled={dim} />
    <Picker aria-label={`Pick ${value}`}><PickerIcon color={dim ? "#777" : G} /></Picker>
  </ObjectBox>
);
const DropBox = styled.span`
  display: grid;
  align-items: center;
  min-width: 0;
  > * { grid-area: 1 / 1; }
  > svg { justify-self: end; margin-right: 9px; pointer-events: none; }
`;
const Select = styled.select`
  appearance: none;
  width: 100%;
  height: 26px;
  padding: 0 3px;
  border: 2px solid #303030;
  border-bottom-color: #242424;
  border-radius: 4px;
  background: #515151;
  line-height: 20px;
  color: #e0e0e0;
`;
const Drop = ({ id, value, label }) => (
  <DropBox>
    <Select id={id} aria-label={label}><option>{value}</option></Select>
    <Down w={11} />
  </DropBox>
);
const PushButton = styled.button`
  height: ${(p) => p.$h || 26}px;
  width: ${(p) => (p.$w ? `${p.$w}px` : "100%")};
  border: 2px solid #303030;
  border-bottom-color: #242424;
  border-radius: 4px;
  background: #585858;
  color: #eee;
  line-height: 20px;
`;

const ObjectHeader = styled.header`
  display: flex;
  flex-direction: column;
  gap: 22px;
  padding: 13px 7px 9px 0;
  border-top: 1px solid #1f1f1f;
  background: #3c3c3c;
`;
const HeadGrid = styled.div`
  display: grid;
  grid-template-columns: 50px 50px minmax(0, 1fr);
  row-gap: ${(p) => p.$gap}px;
  align-items: center;
`;
const CubeCell = styled.button`
  grid-row: 1 / 3;
  align-self: start;
  display: grid;
  justify-items: end;
  padding-left: 11px;
`;
const CheckCell = styled.div`
  padding-left: 20px;
  display: flex;
`;
const HeadLabel = styled.label`
  grid-column: ${(p) => (p.$wide ? "1 / 3" : "auto")};
  padding-right: 7px;
  text-align: right;
  color: #b0b0b0;
`;
const NameLine = styled.div`
  display: flex;
  align-items: center;
  gap: 5px;
`;
const StaticLabel = styled.label`
  padding: 0 14px 0 2px;
  color: #b0b0b0;
`;
const TagLine = styled.div`
  display: grid;
  grid-template-columns: minmax(0, 614fr) 78px minmax(0, 597fr);
  align-items: center;
`;
const OverrideLine = styled.div`
  display: grid;
  grid-template-columns: minmax(0, 438fr) 39px minmax(0, 402fr) minmax(0, 394fr);
  column-gap: 5px;
  > :nth-child(2) { grid-column: 3; }
`;

const Component = styled.section`
  border-top: 2px solid #1a1a1a;
`;
const ComponentHead = styled.div`
  display: flex;
  align-items: center;
  height: 31px;
  padding: 0 12px 0 9px;
  gap: 9px;
  background: #3e3e3e;
  border-bottom: 2px solid ${(p) => (p.$closed ? "#3e3e3e" : "#303030")};
`;
const HeadIcon = styled.span`
  display: flex;
  width: 20px;
`;
const CheckSlot = styled.span`
  display: flex;
  width: 21px;
`;
const Title = styled.h2`
  flex: 1;
  margin: 0;
  font-size: 18px;
  font-weight: 600;
  color: #d6d6d6;
`;
const HeadTools = styled.span`
  display: grid;
  grid-template-columns: repeat(3, 16px);
  justify-items: center;
  gap: 14px;
`;
const Body = styled.div`
  display: flex;
  flex-direction: column;
  gap: 4px;
  padding: 7px 6px 14px 28px;
`;
const Row = styled.div`
  display: grid;
  grid-template-columns: minmax(0, 570fr) minmax(0, 792fr);
  align-items: center;
  height: 26px;
  font-weight: ${(p) => (p.$bold ? 600 : 400)};
  color: ${(p) => (p.$dim ? "#7a7a7a" : "#b8b8b8")};
`;
const LinkLabel = styled.span`
  display: flex;
  justify-content: space-between;
  padding-right: 12px;
`;
const MetaFold = styled.span`
  position: relative;
  > svg { position: absolute; left: -17px; top: 6px; }
`;
const SubHead = styled.h3`
  display: flex;
  align-items: flex-end;
  height: 36px;
  margin: 0;
  font-size: 18px;
  line-height: 20px;
  font-weight: 600;
  color: #c8c8c8;
`;
const VectorBox = styled.div`
  display: grid;
  grid-template-columns: repeat(3, minmax(0, 1fr));
  gap: 9px;
`;
const Axis = styled.label`
  display: grid;
  grid-template-columns: 22px minmax(0, 1fr);
  align-items: center;
  padding-left: 1px;
`;
const HelpBox = styled.div`
  display: flex;
  align-items: center;
  gap: 6px;
  height: 81px;
  padding: 0 8px;
  border: 2px solid #232323;
  border-radius: 4px;
  background: #404040;
`;
const HelpText = styled.p`
  align-self: flex-start;
  margin: 4px 0 0;
  font-size: 15px;
  line-height: 18px;
  color: #b8b8b8;
`;
const ButtonLine = styled.div`
  display: flex;
  gap: 4px;
`;
const MarkedButton = styled.span`
  ${marked}
  display: flex;
`;
const Footer = styled.div`
  display: flex;
  align-items: flex-start;
  justify-content: center;
  padding-top: 12px;
  border-top: 2px solid #1a1a1a;
  flex: 1;
`;

const Section = ({ title, icon, checked, closed, children }) => (
  <Component>
    <ComponentHead $closed={closed}>
      <FoldSlot>{closed ? <FoldClosed /> : <FoldOpen />}</FoldSlot>
      <HeadIcon>{icon}</HeadIcon>
      <CheckSlot>{checked && <Check on label={`${title} enabled`} />}</CheckSlot>
      <Title>{title}</Title>
      <HeadTools>
        <Plain aria-label={`${title} help`}><HelpIcon /></Plain>
        <Plain aria-label={`${title} presets`}><PresetIcon /></Plain>
        <Plain aria-label={`${title} menu`}><Dots /></Plain>
      </HeadTools>
    </ComponentHead>
    {!closed && <Body>{children}</Body>}
  </Component>
);
const Vector = ({ name, values, bold, link }) => (
  <Row $bold={bold}>
    <LinkLabel>{name}{link && <LinkOff />}</LinkLabel>
    <VectorBox>
      {["X", "Y", "Z"].map((a, i) => (
        <Axis key={a}>{a}<TextField $bold={bold} type="text" defaultValue={values[i]} /></Axis>
      ))}
    </VectorBox>
  </Row>
);
const Field = ({ id, name, dim, children }) => (
  <Row $dim={dim}><label htmlFor={id}>{name}</label><div>{children}</div></Row>
);

const Inspector = () => (
  <Panel>
    <TabBar>
      <Tab $active $start={12}><InfoIcon />Inspector</Tab>
      <PanelTools />
    </TabBar>
    <ObjectHeader>
      <HeadGrid $gap={10}>
        <CubeCell aria-label="Object icon"><PrefabIcon w={32} /><Down w={9} /></CubeCell>
        <CheckCell><Check on label="Active" /></CheckCell>
        <NameLine>
          <TextField $bold type="text" aria-label="Object name" defaultValue="Convai NPC Mike Carter" />
          <Check id="static" />
          <StaticLabel htmlFor="static">Static</StaticLabel>
          <Plain aria-label="Static options"><Down w={11} /></Plain>
        </NameLine>
        <HeadLabel htmlFor="tag">Tag</HeadLabel>
        <TagLine>
          <Drop id="tag" value="Character" />
          <HeadLabel htmlFor="layer">Layer</HeadLabel>
          <Drop id="layer" value="" />
        </TagLine>
      </HeadGrid>
      <HeadGrid $gap={5}>
        <HeadLabel $wide htmlFor="prefab">Prefab</HeadLabel>
        <ObjectField id="prefab" icon={<PrefabIcon w={16} />} value="Convai NPC Mike Carter" />
        <span /><span />
        <OverrideLine>
          <Drop value="Overrides" label="Overrides" />
          <PushButton>Select</PushButton>
          <PushButton>Open</PushButton>
        </OverrideLine>
      </HeadGrid>
    </ObjectHeader>

    <Section title="Transform" icon={<AxesIcon />}>
      <Vector name="Position" bold values={["-0.4926873", "0", "-5.278747"]} />
      <Vector name="Rotation" bold values={["0", "0", "0"]} />
      <Vector name="Scale" link values={["1", "1", "1"]} />
    </Section>

    <Section title="Animator" icon={<AnimatorIcon />} checked>
      <Field id="controller" name="Controller"><ObjectField id="controller" icon={<ControllerIcon />} value="Masculine NPC Animator" /></Field>
      <Field id="avatar" name="Avatar"><ObjectField id="avatar" icon={<AvatarIcon />} value="MasculineAvatar" /></Field>
      <Field id="root" name="Apply Root Motion"><Check id="root" /></Field>
      <Field id="update" name="Update Mode"><Drop id="update" value="Normal" /></Field>
      <Field id="culling" name="Culling Mode"><Drop id="culling" value="Always Animate" /></Field>
      <HelpBox>
        <BubbleIcon />
        <HelpText>
          Clip Count: 6<br />
          Curves Pos: 0 Quat: 0 Euler: 0 Scale: 0 Muscles: 778 Generic: 0 PPtr: 0<br />
          Curves Count: 778 Constant: 60 (7.7%) Dense: 506 (65.0%) Stream: 212 (27.2%)
        </HelpText>
      </HelpBox>
    </Section>

    <Section title="Avatar Data (Script)" icon={<ScriptIcon />}>
      <Field dim id="avatarId" name="Avatar Id"><TextField id="avatarId" disabled type="text" defaultValue="65ec10e5da9d855fa6b3e0a4" /></Field>
      <Row $dim><MetaFold><FoldClosed color="#555" />Avatar Metadata</MetaFold></Row>
    </Section>

    <Section title="ConvaiNPC" icon={<ScriptIcon />} checked>
      <Field dim id="script" name="Script"><ObjectField dim id="script" icon={<ScriptIcon w={16} dim />} value="ConvaiNPC" /></Field>
      <SubHead>Character Information</SubHead>
      <Field id="cname" name="Character Name"><TextField id="cname" type="text" defaultValue="Mike Carter" /></Field>
      <Field id="cid" name="Character ID"><TextField id="cid" type="text" defaultValue="7689e880-dde6-11ee-89a3-42010a7be009" /></Field>
      <Field dim id="sid" name="Session ID"><TextField id="sid" disabled type="text" defaultValue="-1" /></Field>
      <Field dim id="active" name="Is Character Active"><Check dim id="active" /></Field>
      <Field dim id="talking" name="Is Character Talking"><Check dim id="talking" /></Field>
      <SubHead>Session Initialization</SubHead>
      <Field id="init" name="Initialize Session ID"><Check id="init" /></Field>
      <ButtonLine>
        <MarkedButton $mark="-4px -4px -5px -4px"><PushButton $w={180}>Add Components</PushButton></MarkedButton>
        <PushButton $w={178}>Copy Debug</PushButton>
      </ButtonLine>
    </Section>

    <Section title="Capsule Collider" icon={<CapsuleIcon />} checked closed />
    <Section title="Audio Source" icon={<AudioIcon />} checked closed />
    <Footer><PushButton $w={342} $h={36}>Add Component</PushButton></Footer>
    <Marker $x={77} $y={960} $d={88}>2</Marker>
  </Panel>
);

export default function App() {
  return (
    <>
      <GlobalStyle />
      <Editor>
        <Workspace>
          <TopRow>
            <Hierarchy />
            <Scene />
          </TopRow>
          <Project />
        </Workspace>
        <Inspector />
      </Editor>
    </>
  );
}
